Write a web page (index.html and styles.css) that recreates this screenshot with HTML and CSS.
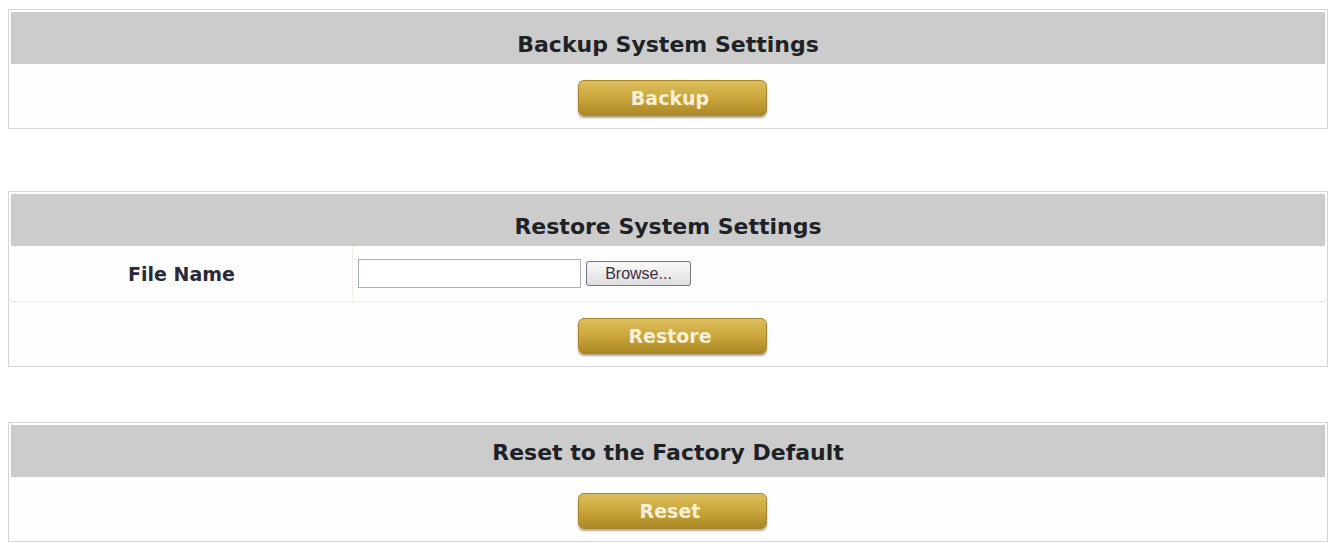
FILE: index.html
```html
<!DOCTYPE html>
<html lang="en">
<head>
    <meta charset="UTF-8">
    <title>System Settings</title>
    <link rel="stylesheet" href="styles.css">
</head>
<body>
    <!-- Backup -->
    <div class="panel panel-backup">
        <div class="panel-title">Backup System Settings</div>
        <div class="panel-row action-row">
            <button class="gold-button">Backup</button>
        </div>
    </div>

    <!-- Restore -->
    <div class="panel panel-restore">
        <div class="panel-title">Restore System Settings</div>
        <div class="panel-row field-row">
            <div class="field-label">File Name</div>
            <div class="field-value">
                <input type="text" class="file-input" aria-label="File Name">
                <button class="browse-button">Browse...</button>
            </div>
        </div>
        <div class="panel-row action-row">
            <button class="gold-button">Restore</button>
        </div>
    </div>

    <!-- Factory default -->
    <div class="panel panel-reset">
        <div class="panel-title">Reset to the Factory Default</div>
        <div class="panel-row action-row">
            <button class="gold-button">Reset</button>
        </div>
    </div>
</body>
</html>
```

FILE: styles.css
```css
body {
    margin: 9px 0 0 8px;
    background: #fff;
    font-family: "DejaVu Sans", Verdana, sans-serif;
    color: #1e2226;
}
.panel {
    width: 1314px;
    border: 1px solid #d6d6d6;
    padding: 2px;
    background: #fefefe;
}
.panel-backup {
    margin-bottom: 62px;
}
.panel-restore {
    margin-bottom: 55px;
}
.panel-title {
    height: 52px;
    box-sizing: border-box;
    padding-top: 14px;
    line-height: 38px;
    background: #cccccc;
    text-align: center;
    font-weight: bold;
    font-size: 22px;
}
.panel-reset .panel-title {
    padding-top: 8px;
    line-height: 40px;
}
.action-row {
    height: 62px;
    display: flex;
    justify-content: center;
    align-items: center;
    box-sizing: border-box;
    padding: 5px 0 0 8px;
}
.field-row {
    display: flex;
    height: 56px;
    border-bottom: 1px solid #f0f0ea;
    box-sizing: border-box;
}
.field-label {
    width: 341px;
    border-right: 1px solid #f0f0ea;
    display: flex;
    align-items: center;
    justify-content: center;
    font-weight: bold;
    font-size: 19px;
    color: #2a2a36;
}
.field-value {
    display: flex;
    align-items: center;
    gap: 5px;
    padding-left: 5px;
}
.file-input {
    width: 223px;
    height: 29px;
    box-sizing: border-box;
    border: 1px solid #a9b3bf;
    margin: 0;
    padding: 2px 4px;
}
.browse-button {
    width: 105px;
    height: 25px;
    border: 1px solid #6f7888;
    border-radius: 3px;
    background: linear-gradient(to bottom, #fafafa, #dedede);
    font-family: "Liberation Sans Narrow", "Liberation Sans", Arial, sans-serif;
    font-size: 16px;
    color: #3e2e44;
    padding: 0;
}
.gold-button {
    width: 189px;
    height: 36px;
    border: 1px solid #a8852a;
    border-radius: 6px;
    background: linear-gradient(to bottom, #dcbe5e 0%, #cda93f 45%, #ab8824 100%);
    box-shadow: 0 2px 2px rgba(90, 70, 20, 0.45);
    color: #f8f0d8;
    font-family: "DejaVu Sans", Verdana, sans-serif;
    font-weight: bold;
    font-size: 19px;
    padding: 0 4px 0 0;
    cursor: pointer;
}
```
